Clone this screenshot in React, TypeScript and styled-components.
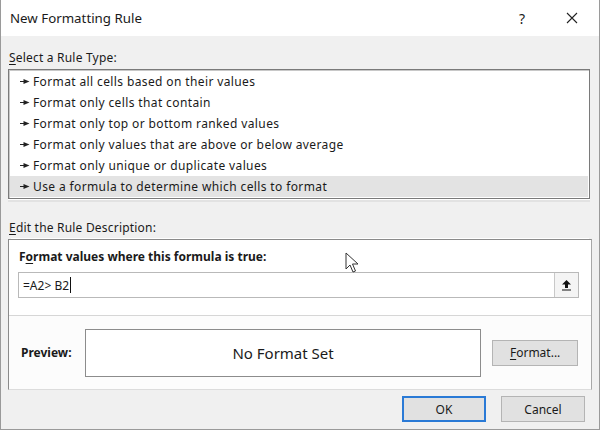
import React, { ReactElement } from 'react';
import styled, { createGlobalStyle } from 'styled-components';

const rules = [
  'Format all cells based on their values',
  'Format only cells that contain',
  'Format only top or bottom ranked values',
  'Format only values that are above or below average',
  'Format only unique or duplicate values',
  'Use a formula to determine which cells to format',
];

function RuleArrow(): ReactElement {
  return (
    <svg width="10" height="7" viewBox="0 0 10 7">
      <path d="M0 3.5 H5" stroke="#222" strokeWidth="1" />
      <path d="M3.5 1 L9.5 3.5 L3.5 6 Z" fill="#222" />
    </svg>
  );
}

function App(): ReactElement {
  return (
    <>
      <GlobalStyle />
      <Window>
        <TitleBar>
          <Title>New Formatting Rule</Title>
          <TitleButton>?</TitleButton>
          <TitleButton>
            <svg width="12" height="12" viewBox="0 0 12 12">
              <path d="M1 1 L11 11 M11 1 L1 11" stroke="#222" strokeWidth="1.1" />
            </svg>
          </TitleButton>
        </TitleBar>
        <Body>
          <SectionLabel>
            <u>S</u>elect a Rule Type:
          </SectionLabel>
          <RuleList>
            {rules.map((r, i) => (
              <RuleItem key={r} $selected={i === rules.length - 1}>
                <RuleArrow />
                {r}
              </RuleItem>
            ))}
          </RuleList>
          <SectionLabel $gap={21}>
            <u>E</u>dit the Rule Description:
          </SectionLabel>
          <DescBox>
            <FormulaPane>
              <BoldLabel>
                F<u>o</u>rmat values where this formula is true:
              </BoldLabel>
              <FormulaField>
                <FormulaText>
                  =A2&gt; B2<Caret />
                </FormulaText>
                <RefButton>
                  <svg width="11" height="12" viewBox="0 0 11 12">
                    <path d="M5.5 1 L10 5.5 H7 V9 H4 V5.5 H1 Z" fill="#111" />
                    <path d="M1 11 H10" stroke="#111" strokeWidth="1" />
                  </svg>
                </RefButton>
              </FormulaField>
            </FormulaPane>
            <PreviewPane>
              <BoldLabel>Preview:</BoldLabel>
              <PreviewBox>No Format Set</PreviewBox>
              <DialogButton $w={86}>
                <u>F</u>ormat...
              </DialogButton>
            </PreviewPane>
          </DescBox>
          <Footer>
            <DialogButton $primary $w={84}>OK</DialogButton>
            <DialogButton $w={84}>Cancel</DialogButton>
          </Footer>
        </Body>
        <Pointer width="14" height="22" viewBox="0 0 14 22">
          <path d="M1 1 V17 L5 13 L8 20 L10.5 19 L7.5 12 H13 Z" fill="#fff" stroke="#333" strokeWidth="1" />
        </Pointer>
      </Window>
    </>
  );
}

export default App;

const GlobalStyle = createGlobalStyle`
  body {
    margin: 0;
    background: #fff;
    font-family: "Noto Sans", "Open Sans", sans-serif;
  }
  u {
    text-decoration-thickness: 1px;
    text-underline-offset: 2px;
  }
`;

const Window = styled.div`
  position: relative;
  width: 600px;
  height: 430px;
  box-sizing: border-box;
  border: 1px solid #9a9a9a;
  border-top: none;
  display: flex;
  flex-direction: column;
  background: #f0f0f0;
  color: #1a1a1a;
  font-size: 12px;
`;

const TitleBar = styled.div`
  height: 36px;
  flex: none;
  background: #fff;
  display: flex;
  align-items: center;
  padding-left: 9px;
`;

const Title = styled.div`
  flex: 1;
  font-size: 13.3px;
  color: #1a1a1a;
`;

const TitleButton = styled.div`
  width: 46px;
  height: 36px;
  display: flex;
  align-items: center;
  justify-content: center;
  font-size: 14px;
  margin-right: 4px;
  &:first-of-type {
    margin-right: 0;
  }
`;

const Body = styled.div`
  flex: 1;
  display: flex;
  flex-direction: column;
  padding: 0 7px;
`;

const SectionLabel = styled.div<{ $gap?: number }>`
  margin-top: ${(p) => p.$gap ?? 14}px;
  height: 16px;
  line-height: 16px;
  margin-bottom: 3px;
  margin-left: 1px;
  letter-spacing: 0.2px;
`;

const RuleList = styled.div`
  background: #fff;
  border: 1px solid #7a7a7a;
  box-shadow: inset 1px 1px 0 #c8c8c8, 0 1px 0 #fff, 0 3px 0 #e2e2e2;
  padding: 1px;
  width: 582px;
  box-sizing: border-box;
`;

const RuleItem = styled.div<{ $selected?: boolean }>`
  height: 21px;
  display: flex;
  align-items: center;
  gap: 3px;
  padding-left: 10px;
  letter-spacing: 0.38px;
  background: ${(p) => (p.$selected ? '#e3e3e3' : 'transparent')};
`;

const DescBox = styled.div`
  width: 584px;
  box-sizing: border-box;
  height: 151px;
  border: 1px solid #8a8a8a;
  border-right-color: #a8a8a8;
  border-bottom-color: #dcdcdc;
  box-shadow: 0 -4px 0 -3px #fff;
  background: #fcfcfc;
  display: flex;
  flex-direction: column;
`;

const FormulaPane = styled.div`
  height: 76px;
  box-sizing: border-box;
  background: #fff;
  border-bottom: 1px solid #d6d6d6;
  padding: 9px 12px 0 9px;
`;

const BoldLabel = styled.div`
  font-weight: 700;
  line-height: 16px;
  height: 16px;
  margin-left: 1px;
  color: #1a1a1a;
`;

const FormulaField = styled.div`
  margin-top: 7px;
  height: 26px;
  box-sizing: border-box;
  border: 1px solid #b9b9b9;
  display: flex;
  align-items: stretch;
  background: #fff;
`;

const FormulaText = styled.div`
  flex: 1;
  display: flex;
  align-items: center;
  padding-left: 4px;
  font-size: 12px;
  white-space: pre;
`;

const Caret = styled.span`
  display: inline-block;
  width: 1px;
  height: 16px;
  background: #111;
  margin-left: 1px;
`;

const RefButton = styled.div`
  width: 23px;
  border-left: 1px solid #c8c8c8;
  background: #f4f4f4;
  display: flex;
  align-items: center;
  justify-content: center;
`;

const PreviewPane = styled.div`
  flex: 1;
  display: flex;
  align-items: center;
  padding: 0 13px 0 11px;
  & > ${BoldLabel} {
    width: 64px;
  }
`;

const PreviewBox = styled.div`
  width: 398px;
  height: 48px;
  box-sizing: border-box;
  border: 1px solid #8c8c8c;
  background: #fff;
  display: flex;
  align-items: center;
  justify-content: center;
  font-size: 15px;
  margin-right: 11px;
`;

const DialogButton = styled.div<{ $primary?: boolean; $w: number }>`
  width: ${(p) => p.$w}px;
  height: 26px;
  box-sizing: border-box;
  border: ${(p) => (p.$primary ? '2px solid #2a7ad6' : '1px solid #b4b4b4')};
  background: #e1e1e1;
  display: flex;
  align-items: center;
  justify-content: center;
  font-size: 12px;
`;

const Footer = styled.div`
  display: flex;
  justify-content: flex-end;
  gap: 15px;
  margin-top: 6px;
  padding-right: 7px;
`;

const Pointer = styled.svg`
  position: absolute;
  left: 344px;
  top: 252px;
`;
